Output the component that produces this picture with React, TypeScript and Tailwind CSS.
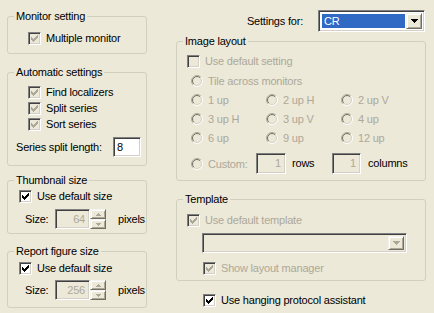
import type { ReactNode } from 'react';
import clsx from 'clsx';

// classic 7x7 check glyph
const CHECK = ['......X', '.....XX', 'X...XXX', 'XX.XXX.', 'XXXXX..', '.XXX...', '..X....'];

const sunken =
  'border border-t-[#808080] border-l-[#808080] border-b-white border-r-white shadow-[inset_1px_1px_0_#404040,inset_-1px_-1px_0_#D4D0C8]';
const raised =
  'border border-t-[#F4F3EE] border-l-[#F4F3EE] border-b-[#716F64] border-r-[#716F64] shadow-[inset_1px_1px_0_#ffffff,inset_-1px_-1px_0_#ACA899]';

function CheckMark({ color }: { color: string }) {
  return (
    <svg width="7" height="7" shapeRendering="crispEdges">
      {CHECK.flatMap((row, y) =>
        row.split('').map((c, x) => (c === 'X' ? <rect key={`${x}-${y}`} x={x} y={y} width="1" height="1" fill={color} /> : null))
      )}
    </svg>
  );
}

function Box({ checked, disabled }: { checked?: boolean; disabled?: boolean }) {
  return (
    <span
      className={clsx(
        'flex h-[13px] w-[13px] shrink-0 items-center justify-center',
        sunken,
        disabled ? 'bg-[#ECE9D8]' : 'bg-white'
      )}
    >
      {checked && <CheckMark color={disabled ? '#ACA899' : '#000000'} />}
    </span>
  );
}

// greyText: label greyed as well (some boxes are locked but keep a black label)
function Check({ label, checked, disabled, greyText }: { label: string; checked?: boolean; disabled?: boolean; greyText?: boolean }) {
  return (
    <div className="flex h-[13px] items-center gap-[5px]">
      <Box checked={checked} disabled={disabled} />
      <span className={clsx('leading-[13px] whitespace-nowrap', greyText ? 'text-[#ACA899]' : 'text-black')}>{label}</span>
    </div>
  );
}

function Radio({ label }: { label: string }) {
  const a = 0.7071;
  const arc = (r: number, up: boolean) => {
    const x1 = 6 - r * a, y1 = 6 + r * a, x2 = 6 + r * a, y2 = 6 - r * a;
    return up ? `M${x1} ${y1} A${r} ${r} 0 0 1 ${x2} ${y2}` : `M${x2} ${y2} A${r} ${r} 0 0 1 ${x1} ${y1}`;
  };
  return (
    <div className="flex h-[12px] items-center gap-[5px]">
      <svg width="12" height="12" className="shrink-0">
        <circle cx="6" cy="6" r="4" fill="#ECE9D8" />
        <path d={arc(5.5, true)} stroke="#ACA899" fill="none" />
        <path d={arc(4.5, true)} stroke="#716F64" fill="none" />
        <path d={arc(5.5, false)} stroke="#ffffff" fill="none" />
        <path d={arc(4.5, false)} stroke="#D4D0C8" fill="none" />
      </svg>
      <span className="leading-[12px] whitespace-nowrap text-[#ACA899]">{label}</span>
    </div>
  );
}

function Field({ value, disabled, className }: { value: string; disabled?: boolean; className?: string }) {
  return (
    <div
      className={clsx(
        'flex items-center px-[4px] leading-[13px]',
        sunken,
        disabled ? 'justify-end bg-[#ECE9D8] text-[#ACA899]' : 'bg-white text-black',
        className
      )}
    >
      {value}
    </div>
  );
}

function Arrow({ up, color, w = 5 }: { up?: boolean; color: string; w?: number }) {
  const h = Math.ceil(w / 2);
  return (
    <svg width={w} height={h} shapeRendering="crispEdges">
      <polygon points={up ? `${w / 2},0 ${w},${h} 0,${h}` : `0,0 ${w},0 ${w / 2},${h}`} fill={color} />
    </svg>
  );
}

function Spin() {
  return (
    <div className="flex h-[20px] w-[16px] flex-col">
      <div className={clsx('flex flex-1 items-center justify-center bg-[#ECE9D8]', raised)}>
        <Arrow up color="#ACA899" />
      </div>
      <div className={clsx('flex flex-1 items-center justify-center bg-[#ECE9D8]', raised)}>
        <Arrow color="#ACA899" />
      </div>
    </div>
  );
}

function SizeRow({ value }: { value: string }) {
  return (
    <div className="flex h-[20px] items-center pl-[17px]">
      <span className="w-[30px] text-black">Size:</span>
      <Field value={value} disabled className="h-[20px] w-[35px]" />
      <Spin />
      <span className="ml-[12px] text-black">pixels</span>
    </div>
  );
}

function Group({ title, className, children }: { title: string; className?: string; children: ReactNode }) {
  return (
    <fieldset className={clsx('rounded-[3px] border border-[#D0D0BF]', className)}>
      <legend className="ml-[6px] px-[2px] leading-[14px] text-black">{title}</legend>
      {children}
    </fieldset>
  );
}

export default function App() {
  return (
    <div className="flex h-[313px] w-[434px] overflow-hidden bg-[#ECE9D8] font-['Liberation_Sans',Arial,sans-serif] text-[11px] tracking-[-0.2px]">
      {/* left column */}
      <div className="ml-[7px] flex w-[140px] shrink-0 flex-col">
        <Group title="Monitor setting" className="mt-[9px] h-[45px]">
          <div className="mt-[9px] pl-[20px]">
            <Check label="Multiple monitor" checked disabled />
          </div>
        </Group>

        <Group title="Automatic settings" className="mt-[11px] h-[101px]">
          <div className="mt-[5px] flex flex-col pl-[20px]">
            <div className="flex h-[16px] items-center"><Check label="Find localizers" checked disabled /></div>
            <div className="flex h-[16px] items-center"><Check label="Split series" checked disabled /></div>
            <div className="flex h-[16px] items-center"><Check label="Sort series" checked disabled /></div>
          </div>
          <div className="mt-[5px] flex h-[20px] items-center pl-[8px]">
            <span className="w-[97px] text-black">Series split length:</span>
            <Field value="8" className="h-[20px] w-[28px] !px-[3px]" />
          </div>
        </Group>

        <Group title="Thumbnail size" className="mt-[7px] h-[61px]">
          <div className="mt-[3px] pl-[11px]">
            <Check label="Use default size" checked />
          </div>
          <div className="mt-[6px]">
            <SizeRow value="64" />
          </div>
        </Group>

        <Group title="Report figure size" className="mt-[10px] h-[64px]">
          <div className="mt-[4px] pl-[11px]">
            <Check label="Use default size" checked />
          </div>
          <div className="mt-[5px]">
            <SizeRow value="256" />
          </div>
        </Group>
      </div>

      {/* right column */}
      <div className="ml-[29px] flex w-[250px] shrink-0 flex-col">
        <div className="mt-[10px] flex h-[22px] items-center justify-end gap-[15px] pr-[1px]">
          <span className="text-black">Settings for:</span>
          <div className={clsx('flex h-[22px] w-[107px] bg-white p-[2px]', sunken)}>
            <div className="flex flex-1 items-stretch p-[1px]">
              <div className="flex flex-1 items-center bg-[#316AC5] pl-[2px] text-white">CR</div>
            </div>
            <div className={clsx('flex w-[16px] items-center justify-center bg-[#ECE9D8]', raised)}>
              <Arrow color="#000000" w={7} />
            </div>
          </div>
        </div>

        <Group title="Image layout" className="mt-[2px] h-[147px]">
          <div className="mt-[7px] pl-[10px]">
            <Check label="Use default setting" disabled greyText />
          </div>
          <div className="mt-[3px] flex flex-col pl-[14px]">
            <div className="flex h-[19px] items-center"><Radio label="Tile across monitors" /></div>
            {[
              ['1 up', '2 up H', '2 up V'],
              ['3 up H', '3 up V', '4 up'],
              ['6 up', '9 up', '12 up'],
            ].map((row) => (
              <div key={row[0]} className="grid h-[19px] grid-cols-[75px_75px_75px] items-center">
                {row.map((r) => <Radio key={r} label={r} />)}
              </div>
            ))}
            <div className="mt-[6px] flex h-[21px] items-center">
              <div className="w-[65px]"><Radio label="Custom:" /></div>
              <Field value="1" disabled className="h-[21px] w-[30px]" />
              <span className="ml-[6px] w-[40px] text-black">rows</span>
              <Field value="1" disabled className="h-[21px] w-[29px]" />
              <span className="ml-[7px] text-black">columns</span>
            </div>
          </div>
        </Group>

        <Group title="Template" className="mt-[11px] h-[89px]">
          <div className="mt-[8px] pl-[10px]">
            <Check label="Use default template" checked disabled greyText />
          </div>
          <div className={clsx('ml-[25px] mt-[6px] flex h-[20px] w-[205px] justify-end bg-[#ECE9D8] p-[2px]', sunken)}>
            <div className={clsx('flex w-[16px] items-center justify-center bg-[#ECE9D8]', raised)}>
              <Arrow color="#ACA899" w={7} />
            </div>
          </div>
          <div className="mt-[9px] pl-[26px]">
            <Check label="Show layout manager" checked disabled greyText />
          </div>
        </Group>

        <div className="mt-[13px] pl-[27px]">
          <Check label="Use hanging protocol assistant" checked />
        </div>
      </div>
    </div>
  );
}
